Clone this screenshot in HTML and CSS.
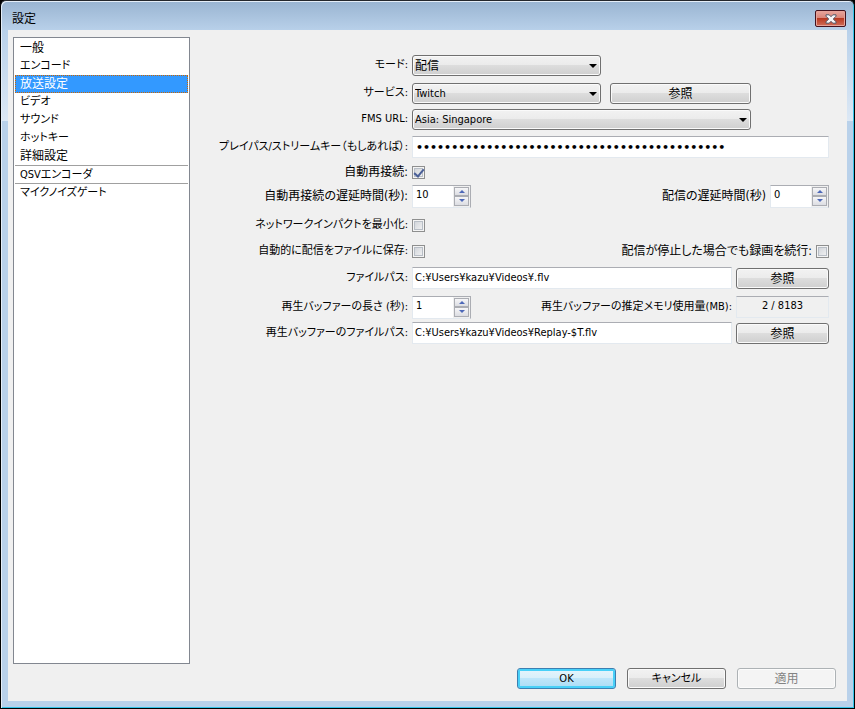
FILE: index.html
```html
<!DOCTYPE html>
<html lang="ja">
<head>
<meta charset="utf-8">
<title>設定</title>
<link rel="stylesheet" href="styles.css">
</head>
<body>
<main class="window">
  <header class="titlebar">
    <h1 class="title">設定</h1>
    <button class="close" type="button" aria-label="閉じる">
      <svg width="12" height="10" viewBox="0 0 12 10"><path d="M1 .8h3.2L6 2.700 7.800 .8H11v1.400L8.300 5 11 7.800v1.400H7.800L6 7.300 4.200 9.200H1V7.800L3.700 5 1 2.200z" fill="#f6f6f8" stroke="#535666"/></svg>
    </button>
  </header>
  <div class="client">
    <div class="body">
      <nav class="pages">
        <a class="page" href="#general">一般</a>
        <a class="page kana" href="#encode">エンコード</a>
        <a class="page current" href="#broadcast" aria-current="page">放送設定</a>
        <a class="page kana" href="#video">ビデオ</a>
        <a class="page kana" href="#sound">サウンド</a>
        <a class="page kana" href="#hotkey">ホットキー</a>
        <a class="page" href="#advanced">詳細設定</a>
        <a class="page kana ruled" href="#qsv">QSVエンコーダ</a>
        <a class="page kana ruled" href="#gate">マイクノイズゲート</a>
      </nav>
      <form class="form">
        <label class="label kana" for="mode">モード:</label>
        <div class="row">
          <span class="combo short"><select class="kanji" id="mode"><option>配信</option></select></span>
        </div>
        <label class="label kana" for="service">サービス:</label>
        <div class="row">
          <span class="combo short"><select id="service"><option>Twitch</option></select></span>
          <button class="button wide" type="button">参照</button>
        </div>
        <label class="label kana" for="url">FMS URL:</label>
        <div class="row">
          <span class="combo long"><select id="url"><option>Asia: Singapore</option></select></span>
        </div>
        <label class="label kana" for="key">プレイパス/ストリームキー（もしあれば）:</label>
        <div class="row"><input class="text secret" id="key" type="password" value="00000000000000000000000000000000000000000000"></div>
        <label class="label" for="reconnect">自動再接続:</label>
        <div class="row"><input class="check" id="reconnect" type="checkbox" checked></div>
        <label class="label" for="retry">自動再接続の遅延時間(秒):</label>
        <div class="row">
          <span class="spin"><input id="retry" type="text" value="10"><span class="arrows"><button class="up" type="button" aria-label="増やす"></button><button class="down" type="button" aria-label="減らす"></button></span></span>
          <label class="second" for="delay">配信の遅延時間(秒)</label>
          <span class="spin"><input id="delay" type="text" value="0"><span class="arrows"><button class="up" type="button" aria-label="増やす"></button><button class="down" type="button" aria-label="減らす"></button></span></span>
        </div>
        <label class="label kana" for="impact">ネットワークインパクトを最小化:</label>
        <div class="row"><input class="check" id="impact" type="checkbox"></div>
        <label class="label kana" for="save">自動的に配信をファイルに保存:</label>
        <div class="row">
          <input class="check" id="save" type="checkbox">
          <label class="second" for="keep">配信が停止した場合でも録画を続行:</label>
          <input class="check" id="keep" type="checkbox">
        </div>
        <label class="label kana" for="path">ファイルパス:</label>
        <div class="row">
          <input class="text" id="path" type="text" value="C:¥Users¥kazu¥Videos¥.flv">
          <button class="button browse" type="button">参照</button>
        </div>
        <label class="label kana" for="length">再生バッファーの長さ (秒):</label>
        <div class="row">
          <span class="spin"><input id="length" type="text" value="1"><span class="arrows"><button class="up" type="button" aria-label="増やす"></button><button class="down" type="button" aria-label="減らす"></button></span></span>
          <label class="second kana" for="memory">再生バッファーの推定メモリ使用量(MB):</label>
          <output class="memory" id="memory">2 / 8183</output>
        </div>
        <label class="label kana" for="replay">再生バッファーのファイルパス:</label>
        <div class="row">
          <input class="text" id="replay" type="text" value="C:¥Users¥kazu¥Videos¥Replay-$T.flv">
          <button class="button browse" type="button">参照</button>
        </div>
      </form>
    </div>
    <footer class="actions">
      <button class="button kana primary" type="button">OK</button>
      <button class="button kana" type="button">キャンセル</button>
      <button class="button" type="button" disabled>適用</button>
    </footer>
  </div>
</main>
</body>
</html>
```
FILE: styles.css
```css
* {
  box-sizing: border-box;
}

body,
button,
input,
select {
  font-family: "DejaVu Sans Condensed", "Noto Sans CJK JP", sans-serif;
  font-size: 11px;
  line-height: 18px;
  font-feature-settings: "palt";
  color: #000;
}

body {
  margin: 0;
  background: #000;
}

.label,
.second,
.page,
.button,
.title,
.kanji {
  font-size: 12px;
}

.kana {
  font-size: 11px;
}

.window {
  display: flex;
  flex-direction: column;
  min-height: 100vh;
  padding: 0 6px 6px;
  border: 1px solid #000;
  border-top-color: #24272c;
  box-shadow: inset 1px 1px 0 #e5eef8, inset -1px -1px 0 #35c3e8;
  border-radius: 6px 6px 0 0;
  background:
    linear-gradient(#99b4d1, #b9d1ea) top / 100% 30px no-repeat,
    linear-gradient(#b9d1ea, #dce8f5) 0 30px / 100% 90px no-repeat,
    #b9d1ea;
}

.titlebar {
  display: flex;
  align-items: center;
  justify-content: space-between;
  height: 29px;
  padding: 6px 2px 0 5px;
}

.title {
  margin: 0;
  font-weight: 400;
}

.close {
  display: grid;
  place-items: center;
  width: 31px;
  height: 17px;
  padding: 0;
  border: 1px solid #43121e;
  border-radius: 2px;
  box-shadow: inset 0 0 0 1px #e6a299;
  background: linear-gradient(#e8a59d, #d98478 48%, #b93922 50%, #d06e59);
}

.client {
  display: flex;
  flex: 1;
  flex-direction: column;
  gap: 4px;
  margin: 0 1px 1px;
  padding: 7px 11px 12px 5px;
  background: #f0f0f0;
}

.body {
  display: flex;
  flex: 1;
}

.pages {
  width: 177px;
  padding: 1px;
  border: 1px solid #828790;
  background: #fff;
}

.page {
  display: block;
  height: 18px;
  padding-left: 5px;
  color: #000;
  text-decoration: none;
}

.current {
  border: 1px dotted #c60;
  padding-left: 4px;
  background: #39f;
  line-height: 16px;
  color: #fff;
}

.ruled {
  border-top: 1px solid #a0a0a0;
  line-height: 17px;
}

.form {
  display: grid;
  flex: 1;
  grid-template-columns: 218px 1fr;
  grid-template-rows: 24px 24px 20px 28px 14px 26px 24px 20px 26px 24px 20px;
  gap: 4px;
  align-items: center;
  align-content: start;
  padding: 16px 7px 0 0;
}

.label {
  text-align: right;
  white-space: nowrap;
}

.second {
  margin-left: auto;
  white-space: nowrap;
}

.row {
  display: flex;
  align-items: center;
  gap: 4px;
}

.combo {
  position: relative;
}

.combo::after {
  position: absolute;
  top: 9px;
  right: 4px;
  border: 4px solid transparent;
  border-top-color: #000;
  border-bottom: 0;
  content: "";
  pointer-events: none;
}

.combo select {
  width: 100%;
  padding: 1px 2px 0;
  appearance: none;
}

.short {
  width: 189px;
}

.long {
  width: 339px;
}

.combo select,
.button {
  display: block;
  height: 21px;
  border: 1px solid #707070;
  border-radius: 3px;
  box-shadow: inset 0 0 0 1px #fafafa;
  background: linear-gradient(#f2f2f2, #ebebeb 49%, #dddddd 50%, #cfcfcf);
}

.button {
  width: 99px;
  padding: 1px 0 0;
}

.wide {
  width: 141px;
  margin-left: 5px;
}

.browse {
  width: 93px;
}

.primary {
  border-color: #3c7fb1;
  box-shadow: inset 0 0 0 2px #48d0f8;
  background: linear-gradient(#e6f5fc, #d8effa 49%, #bee6fa 50%, #aadcf5);
}

.button:disabled {
  border-color: #adb2b5;
  box-shadow: inset 0 0 0 1px #fcfcfc;
  background: #f4f4f4;
  color: #838383;
}

.text,
.memory {
  height: 22px;
  border: 1px solid #e3e9ef;
  border-top-color: #abadb3;
}

.text {
  flex: 1;
  min-width: 0;
  padding: 0 2px 2px;
  background: #fff;
}

.secret {
  padding: 0 3px;
  font-family: "DejaVu Sans", sans-serif;
  font-weight: 700;
}

.memory {
  width: 93px;
  text-align: center;
}

.check {
  display: grid;
  place-items: center;
  width: 13px;
  height: 13px;
  margin: 0;
  border: 1px solid #8e8f8f;
  box-shadow: inset 0 0 0 1px #f4f4f4, inset 0 0 0 2px #b8bec6;
  background: linear-gradient(135deg, #cbcfd5, #f6f6f6);
  appearance: none;
}

.check:checked::after {
  width: 4px;
  height: 8px;
  margin-bottom: 2px;
  border: solid #4a5f97;
  border-width: 0 2px 2px 0;
  content: "";
  transform: rotate(40deg);
}

.spin {
  display: flex;
  width: 59px;
  height: 23px;
  border: 1px solid #abadb3;
  border-left-color: #e3e9ef;
  border-bottom-color: #e3e9ef;
  background: #fff;
}

.spin input {
  flex: 1;
  min-width: 0;
  padding: 0 2px 2px 3px;
  border: 0;
  background: none;
}

.arrows {
  display: grid;
  grid-template-rows: 1fr 1fr;
  width: 17px;
  padding: 1px;
  background: #f0f0f0;
}

.up,
.down {
  display: grid;
  place-items: center;
  padding: 0;
  border: 1px solid #abadb3;
  background: linear-gradient(#f6f6f8, #dcdde2);
}

.up::after,
.down::after {
  border: 3px solid transparent;
  content: "";
}

.up::after {
  border-top: 0;
  border-bottom-color: #4d68b8;
}

.down::after {
  border-top-color: #4d68b8;
  border-bottom: 0;
}

.actions {
  display: flex;
  justify-content: flex-end;
  gap: 11px;
}
```
